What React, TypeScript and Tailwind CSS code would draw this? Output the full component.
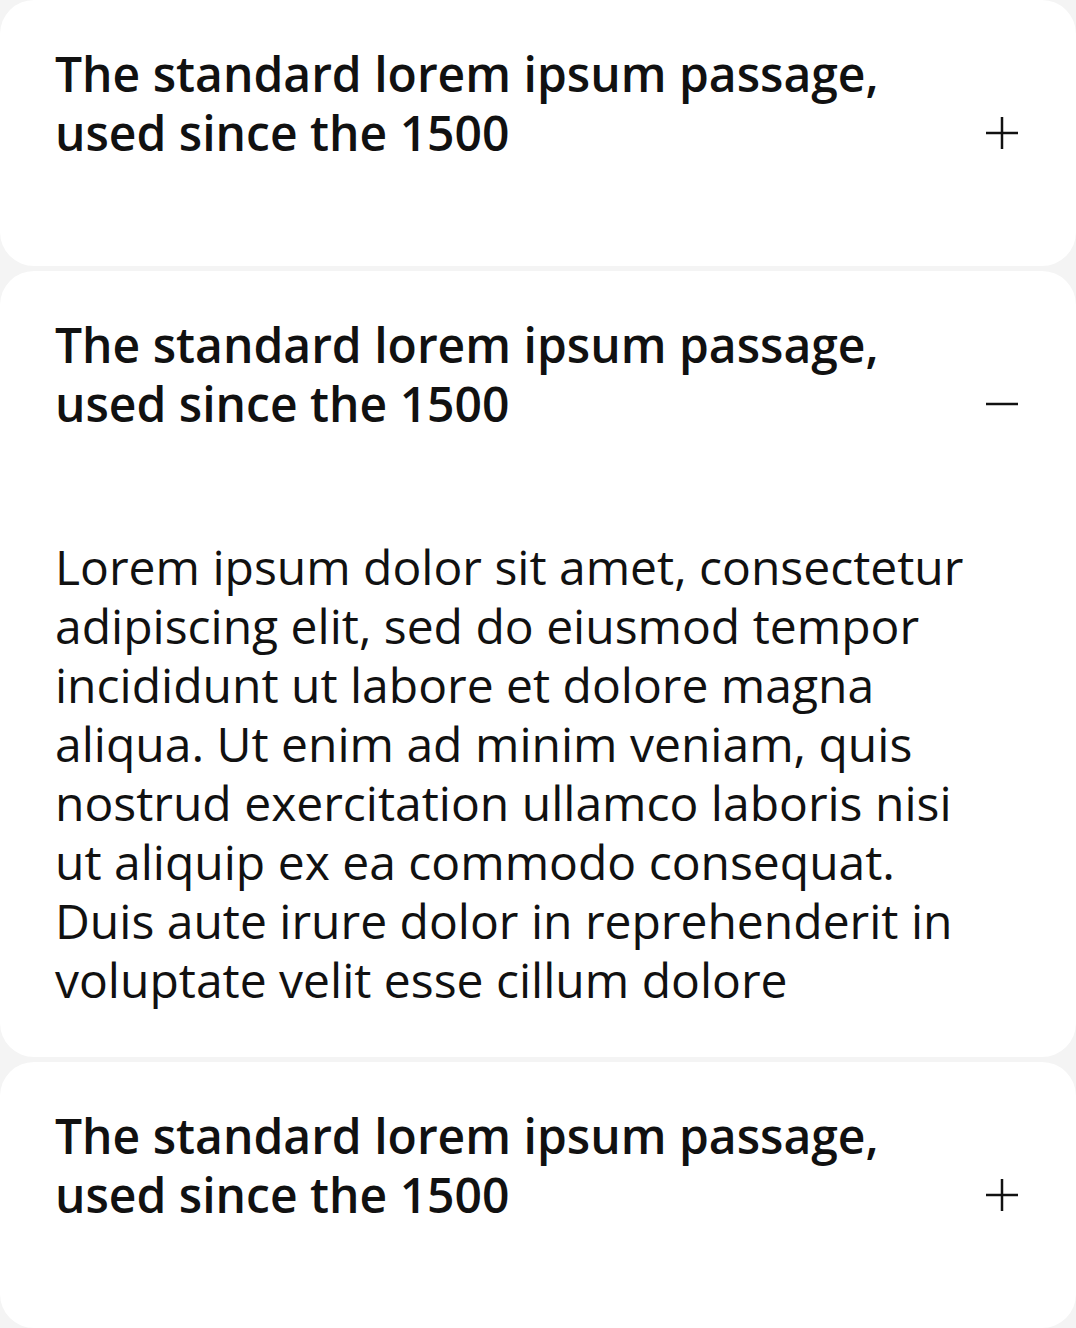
import React, { useState } from "react";

const items = [
  {
    title: "The standard lorem ipsum passage, used since the 1500",
    body: "Lorem ipsum dolor sit amet, consectetur adipiscing elit, sed do eiusmod tempor incididunt ut labore et dolore magna aliqua. Ut enim ad minim veniam, quis nostrud exercitation ullamco laboris nisi ut aliquip ex ea commodo consequat. Duis aute irure dolor in reprehenderit in voluptate velit esse cillum dolore",
  },
  {
    title: "The standard lorem ipsum passage, used since the 1500",
    body: "Lorem ipsum dolor sit amet, consectetur adipiscing elit, sed do eiusmod tempor incididunt ut labore et dolore magna aliqua. Ut enim ad minim veniam, quis nostrud exercitation ullamco laboris nisi ut aliquip ex ea commodo consequat. Duis aute irure dolor in reprehenderit in voluptate velit esse cillum dolore",
  },
  {
    title: "The standard lorem ipsum passage, used since the 1500",
    body: "Lorem ipsum dolor sit amet, consectetur adipiscing elit, sed do eiusmod tempor incididunt ut labore et dolore magna aliqua. Ut enim ad minim veniam, quis nostrud exercitation ullamco laboris nisi ut aliquip ex ea commodo consequat. Duis aute irure dolor in reprehenderit in voluptate velit esse cillum dolore",
  },
];

function PlusMinus({ open }: { open: boolean }) {
  return (
    <svg width="34" height="34" viewBox="0 0 34 34" className="shrink-0 text-[#111]">
      <line x1="1" y1="17" x2="33" y2="17" stroke="currentColor" strokeWidth="2.5" />
      {!open && (
        <line x1="17" y1="1" x2="17" y2="33" stroke="currentColor" strokeWidth="2.5" />
      )}
    </svg>
  );
}

export default function App() {
  const [open, setOpen] = useState(1);

  return (
    <div className="min-h-screen bg-[#f4f4f4] font-['Open_Sans',sans-serif] text-[#111]">
      <div className="flex flex-col gap-[5px]">
        {items.map((item, i) => (
          <div key={i} className="rounded-[34px] bg-white">
            <button
              onClick={() => setOpen(open === i ? -1 : i)}
              className="flex h-[266px] w-full items-center justify-between pl-[55px] pr-[57px] text-left"
            >
              <h2 className="mb-[60px] max-w-[880px] text-[48px] font-semibold leading-[59px]">
                {item.title}
              </h2>
              <PlusMinus open={open === i} />
            </button>

            {open === i && (
              <div className="pb-[48px] pl-[55px] pr-[100px]">
                <p className="text-[48px] leading-[59px]">{item.body}</p>
              </div>
            )}
          </div>
        ))}
      </div>
    </div>
  );
}
